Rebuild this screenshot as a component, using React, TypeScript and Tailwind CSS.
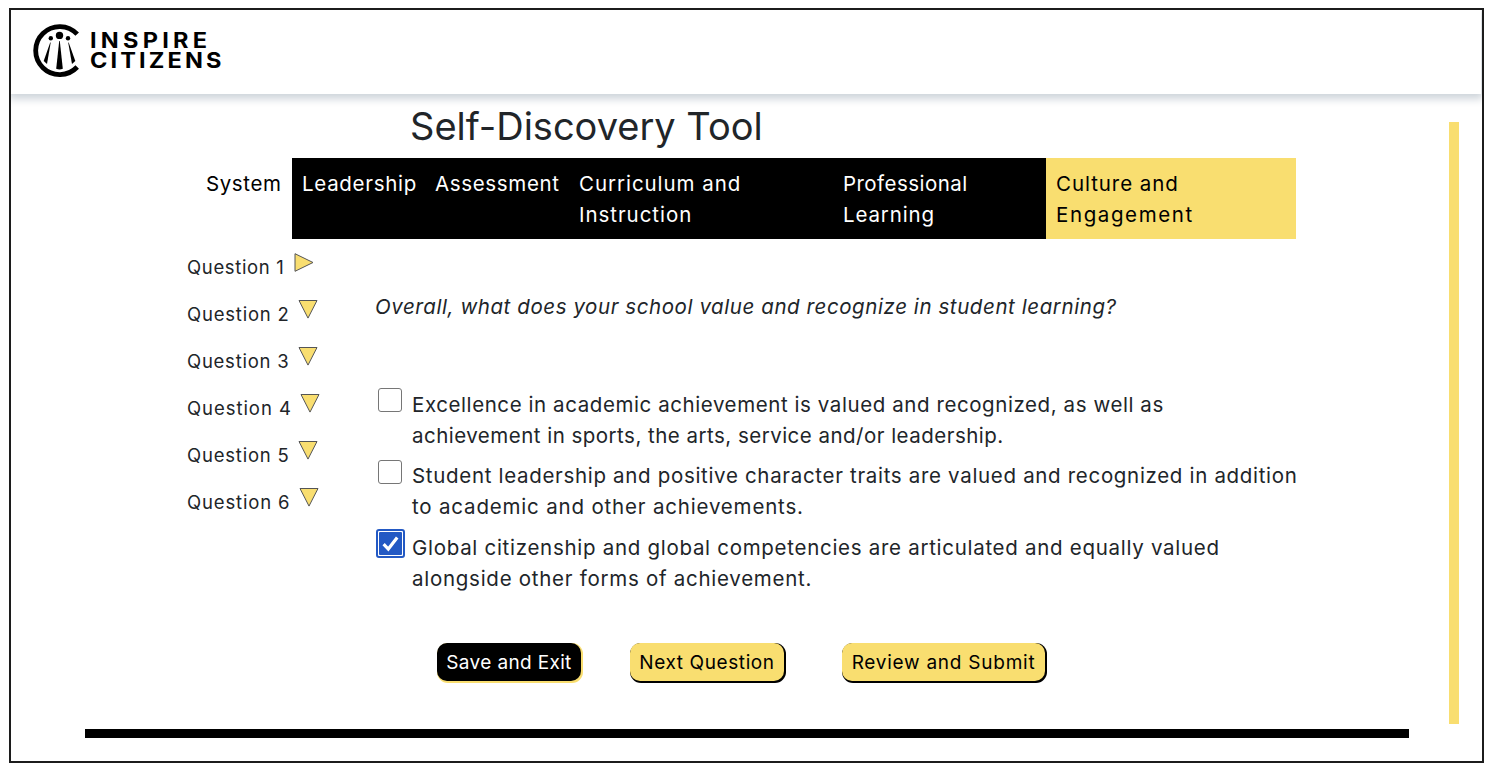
import clsx from "clsx";

const tabs = [
  { lines: ["System"], cell: "w-[96px] text-black", tracking: ["tracking-[0.6px]"] },
  { lines: ["Leadership"], cell: "w-[133px] bg-black text-white", tracking: ["tracking-[0.7px]"] },
  { lines: ["Assessment"], cell: "w-[144px] bg-black text-white", tracking: ["tracking-[0.65px]"] },
  { lines: ["Curriculum and", "Instruction"], cell: "w-[264px] bg-black text-white", tracking: ["tracking-[0.95px]", "tracking-[0.95px]"] },
  { lines: ["Professional", "Learning"], cell: "w-[213px] bg-black text-white", tracking: ["tracking-[0.45px]", "tracking-[0.85px]"] },
  { lines: ["Culture and", "Engagement"], cell: "w-[250px] bg-[#f9de70] text-black", tracking: ["tracking-[0.93px]", "tracking-[1.6px]"] },
];

const questions = [
  { label: "Question 1", width: "w-[107px]", tracking: "tracking-[0.65px]", current: true },
  { label: "Question 2", width: "w-[111px]", tracking: "tracking-[0.8px]" },
  { label: "Question 3", width: "w-[111px]", tracking: "tracking-[0.75px]" },
  { label: "Question 4", width: "w-[113px]", tracking: "tracking-[0.95px]" },
  { label: "Question 5", width: "w-[111px]", tracking: "tracking-[0.8px]" },
  { label: "Question 6", width: "w-[112px]", tracking: "tracking-[0.85px]" },
];

const answers = [
  {
    lines: ["Excellence in academic achievement is valued and recognized, as well as", "achievement in sports, the arts, service and/or leadership."],
    tracking: ["tracking-[0.58px]", "tracking-[0.48px]"],
    checked: false,
  },
  {
    lines: ["Student leadership and positive character traits are valued and recognized in addition", "to academic and other achievements."],
    tracking: ["tracking-[0.68px]", "tracking-[0.82px]"],
    checked: false,
  },
  {
    lines: ["Global citizenship and global competencies are articulated and equally valued", "alongside other forms of achievement."],
    tracking: ["tracking-[0.71px]", "tracking-[0.73px]"],
    checked: true,
  },
];

function Logo() {
  return (
    <div className="flex items-start pl-[21px] pt-[13px]">
      <svg width="50" height="56" viewBox="0 0 50 56">
        <path d="M45.2 11.2A24 24 0 1 0 45.2 44" fill="none" stroke="#000" strokeWidth="4.8" />
        <circle cx="27.5" cy="12.4" r="3.7" />
        <circle cx="18.8" cy="15.2" r="2.2" />
        <circle cx="36" cy="15.2" r="2.2" />
        <path d="M27.2 18h.6l3 27.8q-3.3 1.2-6.6 0z" />
        <path d="M18.2 19.5h.5L15 41l-3.3-3z" />
        <path d="M36.2 19.5h.5l6.6 18.5-3.3 3z" />
      </svg>
      <div className="ml-[8px] flex origin-left scale-x-112 flex-col pt-[8px] text-[21px] font-bold leading-[20px] text-black">
        <span className="tracking-[3.8px]">INSPIRE</span>
        <span className="tracking-[2.8px]">CITIZENS</span>
      </div>
    </div>
  );
}

function Triangle({ current }: { current?: boolean }) {
  return (
    <svg width="20" height="20" viewBox="0 0 20 20" fill="#f9de70" stroke="#555" strokeWidth="1">
      <path d={current ? "M1 .7V18.3L19 9.5z" : "M1 .5H19L10 18.1z"} />
    </svg>
  );
}

function Checkbox({ checked }: { checked: boolean }) {
  if (!checked) {
    return <span className="mx-[2px] mt-[2px] size-[24px] rounded-[3px] border border-[#767676] bg-white" />;
  }
  return (
    <span className="size-[29px] rounded-[3px] border-2 border-[#2359c4] bg-white p-px">
      <svg width="23" height="23" viewBox="0 0 23 23" className="rounded-[1px] bg-[#2359c4]">
        <path d="M4.6 12.2L9.3 17L18.2 5.6" fill="none" stroke="#fff" strokeWidth="3.2" />
      </svg>
    </span>
  );
}

export default function App() {
  return (
    <div className="h-[777px] bg-white pl-[9px] pt-[8px] font-['Inter',sans-serif] text-[#212529]">
      <div className="flex h-[755px] w-[1475px] flex-col overflow-hidden border-2 border-[#1c1c1c]">
        <header className="h-[84px] w-[1470px] shrink-0 shadow-[0_3px_8px_2px_#ced4da]">
          <Logo />
        </header>

        <div className="flex">
          <main className="w-[1438px]">
            <h1 className="pl-[399px] pt-[9px] text-[38px] leading-[46px]">Self-Discovery Tool</h1>

            <nav className="mt-[9px] flex h-[81px] pl-[185px]">
              {tabs.map((tab) => (
                <div key={tab.lines[0]} className={clsx("flex shrink-0 flex-col whitespace-nowrap px-[10px] pt-[9.5px] text-[20.5px] leading-[31px]", tab.cell)}>
                  {tab.lines.map((line, i) => (
                    <span key={line} className={tab.tracking[i]}>{line}</span>
                  ))}
                </div>
              ))}
            </nav>

            <div className="flex pl-[176px]">
              <ul className="w-[188px] pt-[14px]">
                {questions.map((q) => (
                  <li key={q.label} className="flex h-[47px]">
                    <span className={clsx("whitespace-nowrap text-[18.5px] leading-[28px]", q.width, q.tracking)}>{q.label}</span>
                    <Triangle current={q.current} />
                  </li>
                ))}
              </ul>

              <section className="w-[940px] whitespace-nowrap text-[20.5px] leading-[31px]">
                <p className="pt-[52px] italic tracking-[0.58px]">Overall, what does your school value and recognize in student learning?</p>
                <div className="pt-[64px]">
                  {answers.map((a) => (
                    <div key={a.lines[0]} className="flex h-[71.5px] pl-px">
                      <div className="flex w-[36px] shrink-0 items-start">
                        <Checkbox checked={a.checked} />
                      </div>
                      <p className="flex flex-col pt-[2.5px]">
                        {a.lines.map((line, i) => (
                          <span key={line} className={a.tracking[i]}>{line}</span>
                        ))}
                      </p>
                    </div>
                  ))}
                </div>
              </section>
            </div>

            <div className="mt-[42px] flex whitespace-nowrap pl-[426px] text-[19px] leading-[37px]">
              <button className="h-[38px] w-[144px] rounded-[10px] bg-black pt-px text-white tracking-[0.35px] shadow-[1px_1px_0_1px_#f9de70]">Save and Exit</button>
              <button className="ml-[49px] h-[38px] w-[154px] rounded-[10px] bg-[#f9de70] pt-px text-black tracking-[0.6px] shadow-[1px_1px_0_1px_#000]">Next Question</button>
              <button className="ml-[58px] h-[38px] w-[203px] rounded-[10px] bg-[#f9de70] pt-px text-black tracking-[0.75px] shadow-[1px_1px_0_1px_#000]">Review and Submit</button>
            </div>
            <div className="ml-[74px] mt-[48px] h-[9px] w-[1324px] bg-black" />
          </main>
          <div className="mt-[28px] h-[602px] w-[10px] bg-[#f9de70]" />
        </div>
      </div>
    </div>
  );
}
